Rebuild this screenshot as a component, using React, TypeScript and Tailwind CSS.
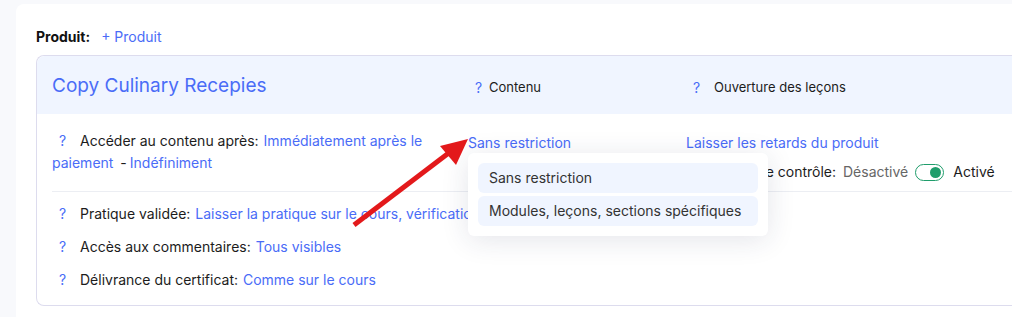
import React from "react";

const Q = () => (
  <span className="inline-block w-[28px] pl-[7px] text-[#4a6cf7]">?</span>
);

export default function App() {
  return (
    <div
      className="relative h-[317px] w-[1012px] overflow-hidden bg-[#f8f9fc] pl-4 pt-1 text-[14px] text-[#1c1c1c]"
      style={{ fontFamily: "Inter, 'Noto Sans', sans-serif" }}
    >
      <div className="h-[320px] rounded-tl-lg bg-white pl-5 pt-[23px]">
        <div className="flex h-5 items-center gap-[11px] leading-5">
          <span className="font-bold text-[#111]">Produit:</span>
          <span className="text-[#4a6cf7]">+ Produit</span>
        </div>
        <div className="mt-[8px] w-[1000px] rounded-l-lg border border-r-0 border-[#dddcee]">
          {/* header */}
          <div className="flex h-[58px] items-center rounded-tl-lg bg-[#f0f5ff] pt-[5px]">
            <div className="-mt-[3px] w-[431px] pl-[15px] text-[19px] text-[#4a6cf7]">Copy Culinary Recepies</div>
            <div className="flex w-[218px] items-center pl-[7px]">
              <span className="w-[14px] text-[#4a6cf7]">?</span>
              <span className="text-[13px]">Contenu</span>
            </div>
            <div className="flex items-center pl-[7px]">
              <span className="w-[21px] text-[#4a6cf7]">?</span>
              <span className="text-[13px]">Ouverture des leçons</span>
            </div>
          </div>
          {/* body */}
          <div className="flex h-[77px] pt-[16px] leading-[22px]">
            <div className="w-[431px] pl-[15px] pr-[36px]">
              <Q />
              <span>Accéder au contenu après:</span>{" "}
              <span className="ml-[1px] text-[#4a6cf7]">Immédiatement après le paiement</span>{" "}
              <span className="mx-[3px]">-</span>
              <span className="text-[#4a6cf7]">Indéfiniment</span>
            </div>
            <div className="relative z-10 w-[218px] pt-[2px]">
              <span className="text-[#4a6cf7]">Sans restriction</span>
              <div className="absolute left-0 top-[23px] z-10 flex w-[300px] flex-col gap-[3px] rounded-md bg-white p-[10px] shadow-[0_4px_28px_rgba(30,40,80,0.12)]">
                <div className="flex h-[30px] items-center rounded-md bg-[#f0f5ff] pl-[11px] text-[#333]">Sans restriction</div>
                <div className="flex h-[30px] items-center rounded-md bg-[#f0f5ff] pl-[11px] text-[#333]">Modules, leçons, sections spécifiques</div>
              </div>
            </div>
            <div className="flex flex-col pt-[2px]">
              <span className="text-[#4a6cf7]">Laisser les retards du produit</span>
              <div className="mt-[7px] flex items-center">
                <span className="flex w-[150px] justify-end whitespace-nowrap">
                  <span className="shrink-0">Accès avec le contrôle:</span>
                </span>
                <span className="ml-[7px] text-[#666]">Désactivé</span>
                <span className="ml-[7px] flex h-[17px] w-[29px] items-center justify-end rounded-full border-[1.5px] border-[#1f9d6b] pr-[2px]">
                  <span className="h-[11px] w-[11px] rounded-full bg-[#1f9d6b]" />
                </span>
                <span className="ml-[9px]">Activé</span>
              </div>
            </div>
          </div>
          <div className="mx-[15px] border-t border-[#eceef3]" />
          <div className="flex flex-col gap-[11px] pb-[14px] pl-[15px] pt-[11px] leading-[22px]">
            <div>
              <Q />
              <span>Pratique validée:</span>{" "}
              <span className="ml-[1px] text-[#4a6cf7]">Laisser la pratique sur le cours, vérification</span>
            </div>
            <div>
              <Q />
              <span>Accès aux commentaires:</span>{" "}
              <span className="ml-[1px] text-[#4a6cf7]">Tous visibles</span>
            </div>
            <div>
              <Q />
              <span>Délivrance du certificat:</span>{" "}
              <span className="ml-[1px] text-[#4a6cf7]">Comme sur le cours</span>
            </div>
          </div>
        </div>
      </div>
      <svg className="pointer-events-none absolute left-0 top-0 z-20" width="1012" height="317">
        <line x1="354" y1="225" x2="450" y2="152" stroke="#e3191b" strokeWidth="5" />
        <polygon points="468,139 440,146 456,165" fill="#e3191b" />
      </svg>
    </div>
  );
}
